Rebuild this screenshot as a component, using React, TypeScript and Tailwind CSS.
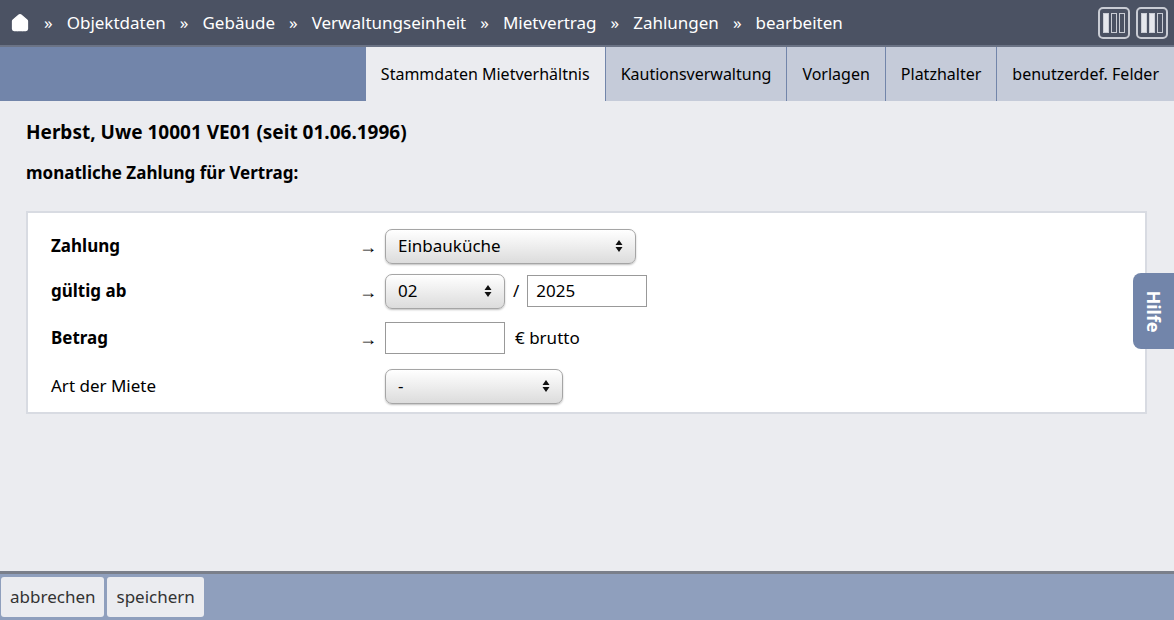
import { Home } from "lucide-react";

const Arrows = () => (
  <svg width="8" height="14" viewBox="0 0 8 14" className="ml-auto">
    <path d="M4 1 L7.5 6 H0.5 Z M4 13 L7.5 8 H0.5 Z" fill="#111" />
  </svg>
);

const Sel = ({ value, w }: { value: string; w: string }) => (
  <div
    className={`${w} h-[35px] flex items-center px-3 rounded-[7px] border border-[#a5a5a5] bg-gradient-to-b from-white to-[#dcdcdc] shadow-[0_1px_2px_rgba(0,0,0,0.25)] text-[17px]`}
  >
    <span>{value}</span>
    <Arrows />
  </div>
);

const Arrow = () => <span className="w-[26px] text-[18px] text-black">→</span>;

const ColIcon = ({ fill }: { fill: number }) => (
  <div className="w-[32px] h-[32px] rounded-[5px] border-2 border-[#c9ccd4] flex items-center justify-center gap-[2px]">
    {[0, 1, 2].map((i) => (
      <div key={i} className={`w-[6px] h-[20px] border border-[#c9ccd4] ${i < fill ? "bg-[#e5e7ec]" : ""}`} />
    ))}
  </div>
);

export default function App() {
  const crumbs = ["Objektdaten", "Gebäude", "Verwaltungseinheit", "Mietvertrag", "Zahlungen", "bearbeiten"];
  const tabs = ["Stammdaten Mietverhältnis", "Kautionsverwaltung", "Vorlagen", "Platzhalter", "benutzerdef. Felder"];
  return (
    <div className="w-[1174px] h-[620px] flex flex-col bg-[#ebecf0] font-['Liberation_Sans',Arial,sans-serif] text-black relative overflow-hidden">
      <div className="h-[47px] bg-[#4b5263] border-b-2 border-[#6b7385] flex items-center pl-[10px] pr-[6px] text-white text-[17px]">
        <Home size={20} fill="white" strokeWidth={1.5} />
        {crumbs.map((c, i) => (
          <span key={c} className={i < 2 ? "ml-[14px]" : "ml-[14px]"}>
            <span className="mr-[14px]">»</span>
            {c}
          </span>
        ))}
        <div className="ml-auto flex gap-[6px]">
          <ColIcon fill={1} />
          <ColIcon fill={2} />
        </div>
      </div>
      <div className="h-[54px] bg-[#7285aa] flex justify-end">
        {tabs.map((t, i) => (
          <div
            key={t}
            className={`h-full flex items-center px-[15px] text-[16px] ${
              i === 0 ? "bg-[#ebecf0]" : "bg-[#c5cbd9] border-l border-[#7285aa]"
            }`}
          >
            {t}
          </div>
        ))}
      </div>
      <div className="flex-1 px-[26px]">
        <div className="mt-[17px] text-[19px] font-bold">Herbst, Uwe 10001 VE01 (seit 01.06.1996)</div>
        <div className="mt-[13px] text-[17px] font-bold">monatliche Zahlung für Vertrag:</div>
        <div className="mt-[26px] w-[1121px] bg-white border-2 border-[#d8dbe2] pl-[23px] pt-[15px] pb-[8px] text-[17px]">
          <div className="flex items-center h-[36px]">
            <span className="w-[308px] font-bold">Zahlung</span>
            <Arrow />
            <Sel value="Einbauküche" w="w-[251px]" />
          </div>
          <div className="flex items-center h-[36px] mt-[9px]">
            <span className="w-[308px] font-bold">gültig ab</span>
            <Arrow />
            <Sel value="02" w="w-[120px]" />
            <span className="mx-[8px]">/</span>
            <div className="w-[120px] h-[32px] border border-[#999] flex items-center px-[8px]">2025</div>
          </div>
          <div className="flex items-center h-[36px] mt-[11px]">
            <span className="w-[308px] font-bold">Betrag</span>
            <Arrow />
            <div className="w-[120px] h-[32px] border border-[#999]" />
            <span className="ml-[10px]">€ brutto</span>
          </div>
          <div className="flex items-center h-[36px] mt-[12px]">
            <span className="w-[334px]">Art der Miete</span>
            <Sel value="-" w="w-[178px]" />
          </div>
        </div>
      </div>
      <div className="h-[49px] bg-[#8f9fbd] border-t-[3px] border-[#7a7f8a] flex items-center gap-[3px] px-[1px] text-[17px] text-[#333]">
        <div className="h-[40px] px-[9px] flex items-center bg-[#ebecf0] rounded-[3px]">abbrechen</div>
        <div className="h-[40px] px-[9px] flex items-center bg-[#ebecf0] rounded-[3px]">speichern</div>
      </div>
      <div className="absolute right-0 top-[273px] w-[41px] h-[76px] bg-[#7285aa] rounded-l-[8px] flex items-center justify-center">
        <span className="text-white font-bold text-[18px] rotate-90">Hilfe</span>
      </div>
    </div>
  );
}
